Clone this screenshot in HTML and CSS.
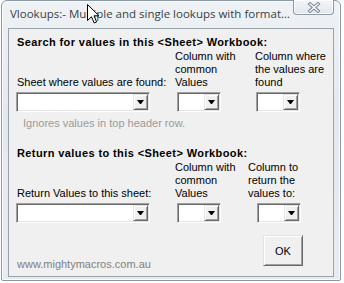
FILE: index.html
```html
<!DOCTYPE html>
<html>
<head>
<meta charset="utf-8">
<link rel="stylesheet" href="styles.css">
</head>
<body>
<div class="window">
  <div class="titlebar">
    <span class="title">Vlookups:- Multiple and single lookups with format...</span>
    <div class="close">
      <svg width="14" height="11" viewBox="0 0 14 11">
        <path d="M3 2 L11 9 M11 2 L3 9" stroke="#7b8792" stroke-width="3.4" stroke-linecap="square" fill="none"/>
        <path d="M3 2 L11 9 M11 2 L3 9" stroke="#ffffff" stroke-width="1.4" stroke-linecap="square" fill="none"/>
      </svg>
    </div>
  </div>
  <div class="client">
    <section class="group group-search">
      <h2 class="heading">Search for values in this &lt;Sheet&gt; Workbook:</h2>
      <div class="fields">
        <div class="field field-sheet">
          <span class="label">Sheet where values are found:</span>
          <div class="combo combo-wide"><span class="combo-btn"><span class="arrow"></span></span></div>
        </div>
        <div class="field field-col">
          <span class="label">Column with<br>common<br>Values</span>
          <div class="combo combo-small"><span class="combo-btn"><span class="arrow"></span></span></div>
        </div>
        <div class="field field-col3">
          <span class="label">Column where<br>the values are<br>found</span>
          <div class="combo combo-small"><span class="combo-btn"><span class="arrow"></span></span></div>
        </div>
      </div>
      <p class="hint">Ignores values in top header row.</p>
    </section>
    <section class="group group-return">
      <h2 class="heading">Return values to this &lt;Sheet&gt; Workbook:</h2>
      <div class="fields">
        <div class="field field-sheet">
          <span class="label">Return Values to this sheet:</span>
          <div class="combo combo-wide"><span class="combo-btn"><span class="arrow"></span></span></div>
        </div>
        <div class="field field-col">
          <span class="label">Column with<br>common<br>Values</span>
          <div class="combo combo-small"><span class="combo-btn"><span class="arrow"></span></span></div>
        </div>
        <div class="field field-col3">
          <span class="label">Column to<br>return the<br>values to:</span>
          <div class="combo combo-small"><span class="combo-btn"><span class="arrow"></span></span></div>
        </div>
      </div>
    </section>
    <div class="footer">
      <span class="site">www.mightymacros.com.au</span>
      <button class="ok">OK</button>
    </div>
  </div>
  <svg class="cursor" width="13" height="21" viewBox="0 0 13 21">
    <path d="M0.5 0.5 L0.5 16.5 L4.5 12.8 L7.2 19 L9.6 18 L7 11.8 L12 11.8 Z" fill="#ffffff" stroke="#000000" stroke-width="1" stroke-linejoin="miter"/>
  </svg>
</div>
</body>
</html>
```

FILE: styles.css
```css
html, body {
  margin: 0;
  padding: 0;
  background: #ffffff;
}

.window {
  position: relative;
  box-sizing: border-box;
  width: 340px;
  height: 281px;
  margin-left: 1px;
  padding: 0 6px 4px 6px;
  border: 1px solid #8b97a2;
  border-radius: 6px 6px 2px 2px;
  background: linear-gradient(#eef2f5, #e4e9ee 40%, #e8ecf0);
  box-shadow: inset 0 0 0 1px #fafcfd;
}

.titlebar {
  height: 27px;
  display: flex;
  align-items: flex-start;
  justify-content: space-between;
}

.title {
  font-family: "Open Sans", "Noto Sans", sans-serif;
  font-size: 11.5px;
  color: #3a3f44;
  margin-top: 5px;
  margin-left: 2px;
  white-space: nowrap;
}

.close {
  width: 41px;
  height: 15px;
  box-sizing: border-box;
  margin-top: -1px;
  margin-right: 0;
  border: 1px solid #8e99a4;
  border-top: none;
  border-radius: 0 0 4px 4px;
  background: linear-gradient(#f3f5f7, #e2e7ec);
  box-shadow: inset 0 0 0 1px #fbfcfd;
  display: flex;
  align-items: center;
  justify-content: center;
}

.close svg {
  display: block;
}

.client {
  box-sizing: border-box;
  height: 249px;
  border: 1px solid #9aa3ac;
  background: #f0f0f0;
  font-family: "Liberation Sans", Arial, sans-serif;
  font-size: 11px;
  line-height: 13px;
  color: #000;
  padding: 0 0 0 7px;
}

.group {
  display: flex;
  flex-direction: column;
}

.heading {
  font-size: 11px;
  line-height: 13px;
  font-weight: bold;
  letter-spacing: 0.4px;
  margin: 7px 0 0 1px;
}

.group-return .heading {
  margin-top: 17px;
}

.fields {
  display: flex;
  align-items: flex-end;
  margin-top: 1px;
}

.field {
  display: flex;
  flex-direction: column;
}

.field-sheet {
  width: 159px;
}

.field-col {
  width: 80px;
}

.group-return .field-col {
  width: 73px;
}

.label {
  margin-left: 1px;
  margin-bottom: 3px;
  white-space: nowrap;
}

.field-col .label,
.field-col3 .label {
  margin-left: 0;
}

.combo {
  box-sizing: border-box;
  height: 20px;
  background: #ffffff;
  border: 1px solid;
  border-color: #a0a0a0 #ffffff #ffffff #a0a0a0;
  box-shadow: inset 1px 1px #696969, inset -1px -1px #e3e3e3;
  padding: 1px;
  display: flex;
  justify-content: flex-end;
}

.combo-wide {
  width: 134px;
}

.combo-small {
  width: 44px;
  margin-left: 2px;
}

.field-col3 .combo-small {
  margin-left: 1px;
}

.group-return .field-col3 .combo-small {
  margin-left: 9px;
}

.combo-btn {
  box-sizing: border-box;
  width: 15px;
  height: 16px;
  background: #f0f0f0;
  border: 1px solid;
  border-color: #e3e3e3 #696969 #696969 #e3e3e3;
  box-shadow: inset 1px 1px #ffffff, inset -1px -1px #a0a0a0;
  display: flex;
  align-items: center;
  justify-content: center;
}

.arrow {
  width: 1px;
  height: 0;
  border-left: 3px solid transparent;
  border-right: 3px solid transparent;
  border-top: 4px solid #000000;
}

.hint {
  margin: 5px 0 0 7px;
  color: #9a9a9a;
  white-space: nowrap;
}

.footer {
  display: flex;
  justify-content: space-between;
  align-items: flex-start;
  margin-top: 12px;
  padding-right: 30px;
}

.site {
  font-size: 11px;
  line-height: 15px;
  color: #808080;
  margin-top: 22px;
  margin-left: 1px;
}

.ok {
  box-sizing: border-box;
  width: 40px;
  height: 31px;
  margin: 0;
  padding: 0;
  background: #f0f0f0;
  border: 1px solid;
  border-color: #e3e3e3 #696969 #696969 #e3e3e3;
  box-shadow: inset 1px 1px #ffffff, inset -1px -1px #a0a0a0;
  font-family: "Liberation Sans", Arial, sans-serif;
  font-size: 11px;
  color: #000;
}

.cursor {
  position: absolute;
  left: 85px;
  top: 3px;
}
```
